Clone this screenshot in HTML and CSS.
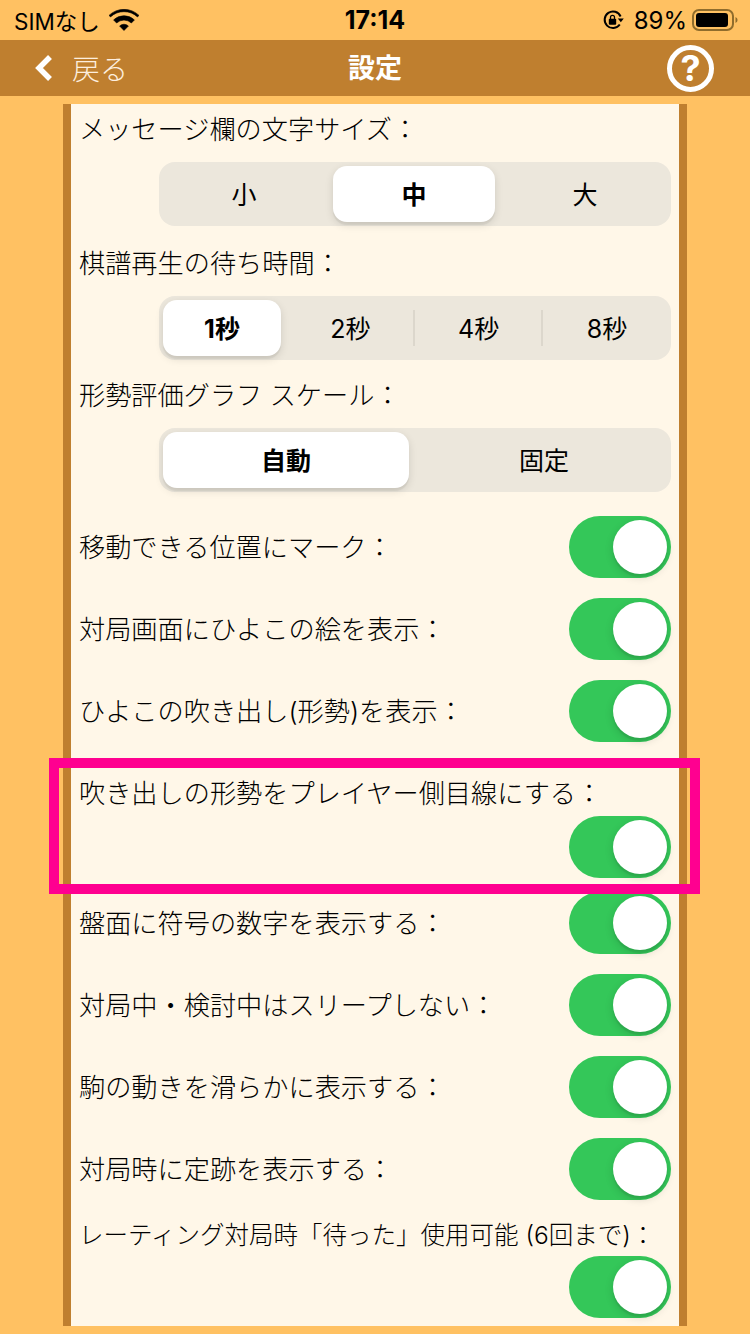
FILE: index.html
```html
<!DOCTYPE html>
<html lang="ja">
<head>
<meta charset="utf-8">
<title>設定</title>
<link rel="stylesheet" href="styles.css">
</head>
<body>
<header class="status">
  <div class="status-left">
    <span>SIMなし</span>
    <svg class="wifi" viewBox="0 0 30 22" width="30" height="22"><path d="M15 21.5 10.6 17a6.4 6.4 0 0 1 8.8 0zM7.6 14l-3-3.1a15 15 0 0 1 20.8 0l-3 3.1a10.8 10.8 0 0 0-14.800 0zM1.500 7.900 0 6.400a21.600 21.600 0 0 1 30 0L28.500 7.900a20 20 0 0 0-27 0z" fill="#000" stroke="#000" stroke-width=".6"/></svg>
  </div>
  <div class="status-time">17:14</div>
  <div class="status-right">
    <svg class="lock" viewBox="0 0 22 22" width="22" height="22"><path d="M17.800 15.500A8.300 8.300 0 1 1 18.600 7.500" fill="none" stroke="#000" stroke-width="2"/><path d="M15.800 9.500h6l-3 3.800z" fill="#000"/><rect x="6.800" y="9.800" width="7.400" height="6" rx="1" fill="#000"/><path d="M8.500 10V8.300a2 2 0 0 1 4 0V10" fill="none" stroke="#000" stroke-width="1.300"/></svg>
    <span class="pct">89%</span>
    <svg class="battery" viewBox="0 0 46 22" width="46" height="22"><rect x="1" y="1" width="40" height="20" rx="6" fill="none" stroke="#8f6c2c" stroke-width="2"/><rect x="4" y="4" width="32" height="14" rx="3" fill="#000"/><path d="M43.500 8v6a3.200 3.200 0 0 0 0-6z" fill="#8f6c2c"/></svg>
  </div>
</header>

<nav class="nav">
  <div class="back">
    <svg class="chevron" viewBox="0 0 18 28" width="18" height="28"><path d="M15 3 4 14l11 11" fill="none" stroke="#fff" stroke-width="5.500"/></svg>
    <span>戻る</span>
  </div>
  <div class="title">設定</div>
  <div class="help">?</div>
</nav>

<main class="panel">
  <div class="label first">メッセージ欄の文字サイズ：</div>
  <div class="seg three">
    <span class="opt">小</span><span class="opt on">中</span><span class="opt">大</span>
  </div>
  <div class="label l2">棋譜再生の待ち時間：</div>
  <div class="seg four">
    <span class="opt on">1秒</span><span class="opt">2秒</span><span class="opt sep">4秒</span><span class="opt sep">8秒</span>
  </div>
  <div class="label l3">形勢評価グラフ スケール：</div>
  <div class="seg two">
    <span class="opt on">自動</span><span class="opt">固定</span>
  </div>

  <div class="rows">
    <div class="row"><span class="label">移動できる位置にマーク：</span><span class="toggle"></span></div>
    <div class="row"><span class="label">対局画面にひよこの絵を表示：</span><span class="toggle"></span></div>
    <div class="row"><span class="label">ひよこの吹き出し(形勢)を表示：</span><span class="toggle"></span></div>
  </div>

  <div class="stack s1">
    <div class="label">吹き出しの形勢をプレイヤー側目線にする：</div>
    <span class="toggle"></span>
  </div>

  <div class="rows r2">
    <div class="row"><span class="label">盤面に符号の数字を表示する：</span><span class="toggle"></span></div>
    <div class="row"><span class="label">対局中・検討中はスリープしない：</span><span class="toggle"></span></div>
    <div class="row"><span class="label">駒の動きを滑らかに表示する：</span><span class="toggle"></span></div>
    <div class="row"><span class="label">対局時に定跡を表示する：</span><span class="toggle"></span></div>
  </div>

  <div class="stack s2">
    <div class="label small">レーティング対局時「待った」使用可能 (6回まで)：</div>
    <span class="toggle"></span>
  </div>
</main>

<div class="highlight"></div>
</body>
</html>
```

FILE: styles.css
```css
* { box-sizing: border-box; }

html, body {
  margin: 0;
  padding: 0;
}

body {
  position: relative;
  width: 750px;
  height: 1334px;
  overflow: hidden;
  background: #ffc162;
  color: #000;
  font-family: "Inter", "Noto Sans CJK JP", sans-serif;
}

.status {
  height: 40px;
  position: relative;
  display: flex;
  align-items: center;
  justify-content: space-between;
  padding: 0 12px 0 14px;
  font-size: 22.5px;
  color: #000;
}

.status-left,
.status-right {
  display: flex;
  align-items: center;
}

.status-left .wifi { margin-left: 9px; }

.status-time {
  position: absolute;
  left: 0;
  right: 0;
  text-align: center;
  font-weight: 700;
  font-size: 25px;
}

.lock { margin-right: 10px; }
.pct { margin-right: 5px; font-size: 24px; }

.nav {
  height: 56px;
  background: #bf7f2f;
  position: relative;
  display: flex;
  align-items: center;
  justify-content: space-between;
  padding: 0 36px 0 35px;
  color: #fff;
}

.back {
  display: flex;
  align-items: center;
  gap: 19px;
  font-size: 28px;
  font-weight: 300;
  color: #fdeede;
}

.title {
  position: absolute;
  left: 0;
  right: 0;
  padding-bottom: 3px;
  text-align: center;
  font-size: 27px;
  font-weight: 700;
}

.help {
  width: 47px;
  height: 47px;
  border: 5px solid #fff;
  border-radius: 50%;
  display: flex;
  align-items: center;
  justify-content: center;
  font-size: 36px;
  font-weight: 700;
  line-height: 1;
  position: relative;
}

.panel {
  margin: 8px 0 0 63px;
  width: 624px;
  height: 1222px;
  overflow: hidden;
  background: #fff7e8;
  border-left: 8px solid #bf7f2f;
  border-right: 8px solid #bf7f2f;
  padding: 0 8px 0 8px;
}

.label {
  display: block;
  font-size: 26.2px;
  font-weight: 300;
  line-height: 30px;
  height: 28px;
  white-space: nowrap;
}

.label.first { margin-top: 11px; }
.label.l2 { margin-top: 23px; }
.label.l3 { margin-top: 21px; }
.label.small { font-size: 24.5px; }

.seg {
  margin: 19px 0 0 80px;
  width: 512px;
  height: 64px;
  padding: 4px;
  border-radius: 16px;
  background: #ece7dc;
  display: grid;
  font-size: 25px;
  font-weight: 400;
  align-items: stretch;
}

.three { grid-template-columns: 162px 162px 164px; column-gap: 8px; }
.four { grid-template-columns: repeat(4, 118px); column-gap: 10.330px; }
.two { grid-template-columns: repeat(2, 246px); column-gap: 12px; }

.opt {
  position: relative;
  display: flex;
  align-items: center;
  justify-content: center;
  padding-bottom: 3px;
  border-radius: 14px;
}

.opt.on {
  background: #fff;
  font-weight: 700;
  box-shadow: 0 3px 8px rgba(0, 0, 0, 0.12), 0 3px 1px rgba(0, 0, 0, 0.05);
}

.opt.sep::before {
  content: "";
  position: absolute;
  left: -7px;
  top: 10px;
  bottom: 10px;
  width: 2px;
  background: #dcd7cc;
}

.rows {
  margin-top: 24px;
  display: flex;
  flex-direction: column;
  gap: 20px;
}

.rows.r2 { margin-top: 14px; }

.row {
  display: flex;
  align-items: center;
  justify-content: space-between;
  height: 62px;
}

.stack {
  display: flex;
  flex-direction: column;
}

.stack .toggle { align-self: flex-end; margin-top: 9px; }
.stack.s1 { margin-top: 37px; }
.stack.s2 { margin-top: 20px; }
.stack.s2 .toggle { margin-top: 8px; }

.toggle {
  position: relative;
  display: block;
  flex: none;
  width: 102px;
  height: 62px;
  border-radius: 31px;
  background: #34c759;
}

.toggle::after {
  content: "";
  position: absolute;
  top: 4px;
  right: 4px;
  width: 54px;
  height: 54px;
  border-radius: 50%;
  background: #fff;
  box-shadow: 0 3px 8px rgba(0, 0, 0, 0.15), 0 3px 1px rgba(0, 0, 0, 0.06);
}

.highlight {
  position: absolute;
  left: 49px;
  top: 758px;
  width: 651px;
  height: 136px;
  border: 10px solid #ff0090;
  pointer-events: none;
}
```
